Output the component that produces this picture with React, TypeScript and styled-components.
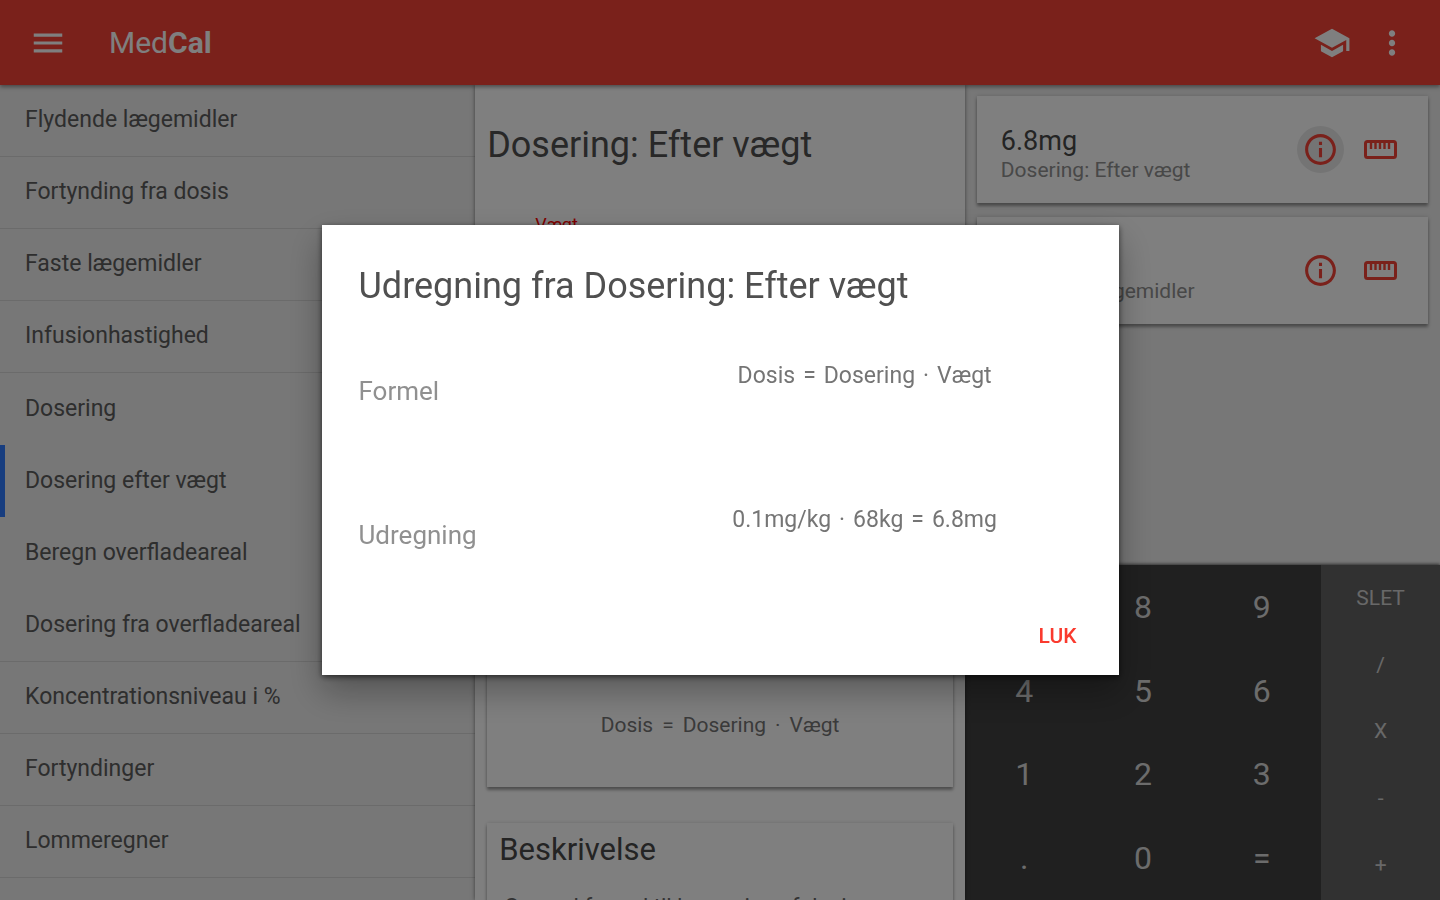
import React from "react";
import styled, { createGlobalStyle } from "styled-components";
import { MdMenu, MdSchool, MdMoreVert, MdInfoOutline } from "react-icons/md";

const GlobalStyle = createGlobalStyle`
  *, *::before, *::after { box-sizing: border-box; }
  html, body { margin: 0; padding: 0; }
  body {
    font-family: Roboto, "Liberation Sans", sans-serif;
    color: #444;
    background: #eee;
  }
  button { font: inherit; color: inherit; border: 0; background: none; padding: 0; cursor: pointer; }
  h1, h2, h3, p, ul, dl, dd { margin: 0; padding: 0; font-weight: 400; }
`;

const Shell = styled.div`
  display: grid;
  grid-template-rows: auto 1fr;
  height: 100vh;
  overflow: hidden;
`;

const TopBar = styled.header`
  position: relative;
  z-index: 2;
  display: flex;
  align-items: center;
  height: 85px;
  padding: 0 24px;
  background: #f44336;
  color: #fff;
  box-shadow: 0 2px 4px rgba(0, 0, 0, 0.4);
`;

const BarButton = styled.button`
  display: grid;
  place-items: center;
  width: 48px;
  height: 48px;
  margin-left: 12px;
  &:first-child { margin-left: 0; }
  svg { width: 38px; height: 38px; }
`;

const Brand = styled.h1`
  flex: 1;
  margin-left: 37px;
  font-size: 30px;
  line-height: 36px;
  b { font-weight: 700; }
`;

const Columns = styled.div`
  display: grid;
  grid-template-columns: 33fr 34fr 33fr;
  min-height: 0;
`;

const Sidebar = styled.nav`
  background: #eee;
  overflow: hidden;
`;

const NavList = styled.ul`
  list-style: none;
`;

const NavGroup = styled.li`
  border-bottom: 1px solid #d6d6d6;
`;

const NavLink = styled.a<{ $active?: boolean }>`
  display: flex;
  align-items: center;
  height: 72px;
  padding: 0 20px;
  border-left: 5px solid ${(p) => (p.$active ? "#2f7bff" : "transparent")};
  font-size: 23px;
  line-height: 28px;
  color: #5c5c5c;
  text-decoration: none;
`;

const NavRow = styled.li`
  height: 72px;
  border-bottom: 1px solid #d6d6d6;
  ${NavLink} { height: 70px; }
`;

const Main = styled.main`
  position: relative;
  z-index: 1;
  display: flex;
  flex-direction: column;
  min-width: 0;
  min-height: 0;
  padding: 36px 12px 0;
  overflow: hidden;
  background: #fff;
  box-shadow: 0 0 4px rgba(0, 0, 0, 0.5);
`;

const PageTitle = styled.h2`
  font-size: 36px;
  line-height: 48px;
  color: #505050;
`;

const Field = styled.div`
  display: flex;
  flex-direction: column;
  flex: none;
  height: 314px;
  padding: 44px 48px 0;
  label { font-size: 18px; line-height: 24px; color: #f00; }
  input {
    height: 36px;
    border: 0;
    border-bottom: 2px solid #f44336;
    font: 22px/28px Roboto, sans-serif;
    color: #444;
  }
`;

const Card = styled.section`
  flex: none;
  background: #fff;
  box-shadow: 0 3px 3px rgba(0, 0, 0, 0.35), 0 0 4px rgba(0, 0, 0, 0.15);
`;

const FormulaCard = styled(Card)`
  display: grid;
  place-items: end center;
  height: 304px;
  padding-bottom: 46px;
`;

const TextCard = styled(Card)`
  margin-top: 36px;
  padding: 6px 12px;
  h3 { font-size: 31px; line-height: 42px; color: #484848; }
  p { margin-top: 22px; padding: 0 5px; font-size: 22px; line-height: 28px; color: #666; }
`;

const Formula = styled.span<{ $size: number; $gap: number }>`
  display: inline-flex;
  gap: ${(p) => p.$gap}px;
  font-size: ${(p) => p.$size}px;
  line-height: 32px;
  color: #757575;
  white-space: nowrap;
`;

const Side = styled.aside`
  display: flex;
  flex-direction: column;
  min-height: 0;
  background: #eee;
`;

const Results = styled.div`
  display: flex;
  flex: 1;
  flex-direction: column;
  gap: 14px;
  min-height: 0;
  padding: 11px 12px;
`;

const ResultCard = styled(Card)`
  display: flex;
  align-items: center;
  height: 107px;
  padding: 0 24px;
`;

const ResultText = styled.div`
  flex: 1;
  padding-top: 9px;
  h3 { font-size: 27px; line-height: 32px; color: #484848; }
  p { font-size: 21px; line-height: 26px; color: #909090; }
`;

const ResultButton = styled.button<{ $pressed?: boolean }>`
  display: grid;
  place-items: center;
  width: 47px;
  height: 47px;
  margin-left: 13px;
  border-radius: 50%;
  background: ${(p) => (p.$pressed ? "#e8e8e8" : "transparent")};
  color: #f44336;
  svg { width: 37px; height: 37px; }
`;

const Keypad = styled.div`
  display: grid;
  grid-template-columns: 3fr 1fr;
  height: 335px;
  background: #404040;
  color: #d8d8d8;
  box-shadow: 0 -1px 3px rgba(0, 0, 0, 0.6);
`;

const Digits = styled.div`
  display: grid;
  grid-template-columns: repeat(3, 1fr);
  grid-auto-rows: 1fr;
  font-size: 32px;
  line-height: 36px;
`;

const Operators = styled.div`
  display: grid;
  grid-auto-rows: 1fr;
  padding-bottom: 2px;
  background: #636363;
  font-size: 21px;
  line-height: 24px;
  color: #d0d0d0;
`;

const Scrim = styled.div`
  position: fixed;
  inset: 0;
  z-index: 10;
  display: grid;
  place-items: center;
  background: rgba(0, 0, 0, 0.5);
`;

const Dialog = styled.section`
  width: min(797px, 90vw);
  padding: 37px 37px 15px;
  background: #fff;
  box-shadow: 0 16px 32px rgba(0, 0, 0, 0.3), 0 2px 6px rgba(0, 0, 0, 0.6);
`;

const DialogTitle = styled.h2`
  font-size: 36px;
  line-height: 48px;
  color: #505050;
`;

const Steps = styled.dl`
  margin-top: 50px;
`;

const Step = styled.div`
  display: grid;
  grid-template-columns: 2fr 3fr;
  height: 144px;
  dt { padding-top: 15px; font-size: 26px; line-height: 32px; color: #909090; }
  dd { text-align: center; }
`;

const DialogActions = styled.div`
  display: flex;
  justify-content: flex-end;
  margin-top: -36px;
`;

const FlatButton = styled.button`
  height: 48px;
  padding: 0 5px;
  font-size: 21px;
  line-height: 24px;
  font-weight: 500;
  color: #fa3a2e;
`;

const Ruler = () => (
  <svg viewBox="0 0 37 37" fill="none" stroke="currentColor" strokeWidth="3" aria-hidden="true">
    <rect x="3.5" y="10.5" width="30" height="16" rx="2" />
    <path d="M9 11v7M13.5 11v7M18 11v7M22.5 11v7M27 11v7" strokeWidth="2.4" />
  </svg>
);

const first = ["Flydende lægemidler", "Fortynding fra dosis", "Faste lægemidler", "Infusionhastighed"];
const dosing = ["Dosering", "Dosering efter vægt", "Beregn overfladeareal", "Dosering fra overfladeareal"];
const last = ["Koncentrationsniveau i %", "Fortyndinger", "Lommeregner"];
const results = [
  { value: "6.8mg", source: "Dosering: Efter vægt", pressed: true },
  { value: "2.5ml", source: "Flydende lægemidler", pressed: false },
];
const digits = ["7", "8", "9", "4", "5", "6", "1", "2", "3", ".", "0", "="];
const operators = ["SLET", "/", "X", "-", "+"];

const Rows = ({ items }: { items: string[] }) => (
  <>
    {items.map((name) => (
      <NavRow key={name}><NavLink href="#">{name}</NavLink></NavRow>
    ))}
  </>
);

const Terms = ({ terms, size, gap }: { terms: string[]; size: number; gap: number }) => (
  <Formula $size={size} $gap={gap}>{terms.map((t, i) => <span key={i}>{t}</span>)}</Formula>
);

export default function App() {
  return (
    <>
      <GlobalStyle />
      <Shell>
        <TopBar>
          <BarButton aria-label="Menu"><MdMenu /></BarButton>
          <Brand>Med<b>Cal</b></Brand>
          <BarButton aria-label="Vejledning"><MdSchool /></BarButton>
          <BarButton aria-label="Mere"><MdMoreVert /></BarButton>
        </TopBar>
        <Columns>
          <Sidebar>
            <NavList>
              <Rows items={first} />
              <NavGroup>
                {dosing.map((name) => (
                  <NavLink key={name} href="#" $active={name === "Dosering efter vægt"}>{name}</NavLink>
                ))}
              </NavGroup>
              <Rows items={last} />
            </NavList>
          </Sidebar>
          <Main>
            <PageTitle>Dosering: Efter vægt</PageTitle>
            <Field>
              <label htmlFor="weight">Vægt</label>
              <input id="weight" defaultValue="68" />
            </Field>
            <FormulaCard>
              <Terms size={21} gap={9} terms={["Dosis", "=", "Dosering", "·", "Vægt"]} />
            </FormulaCard>
            <TextCard>
              <h3>Beskrivelse</h3>
              <p>Generel formel til beregning af dosis</p>
            </TextCard>
          </Main>
          <Side>
            <Results>
              {results.map((r) => (
                <ResultCard key={r.source}>
                  <ResultText>
                    <h3>{r.value}</h3>
                    <p>{r.source}</p>
                  </ResultText>
                  <ResultButton aria-label="Vis udregning" $pressed={r.pressed}><MdInfoOutline /></ResultButton>
                  <ResultButton aria-label="Skift enhed"><Ruler /></ResultButton>
                </ResultCard>
              ))}
            </Results>
            <Keypad>
              <Digits>{digits.map((d) => <button key={d}>{d}</button>)}</Digits>
              <Operators>{operators.map((o) => <button key={o}>{o}</button>)}</Operators>
            </Keypad>
          </Side>
        </Columns>
      </Shell>
      <Scrim>
        <Dialog role="dialog" aria-modal="true" aria-labelledby="dialog-title">
          <DialogTitle id="dialog-title">Udregning fra Dosering: Efter vægt</DialogTitle>
          <Steps>
            <Step>
              <dt>Formel</dt>
              <dd><Terms size={23} gap={8} terms={["Dosis", "=", "Dosering", "·", "Vægt"]} /></dd>
            </Step>
            <Step>
              <dt>Udregning</dt>
              <dd><Terms size={23} gap={8} terms={["0.1mg/kg", "·", "68kg", "=", "6.8mg"]} /></dd>
            </Step>
          </Steps>
          <DialogActions><FlatButton>LUK</FlatButton></DialogActions>
        </Dialog>
      </Scrim>
    </>
  );
}
